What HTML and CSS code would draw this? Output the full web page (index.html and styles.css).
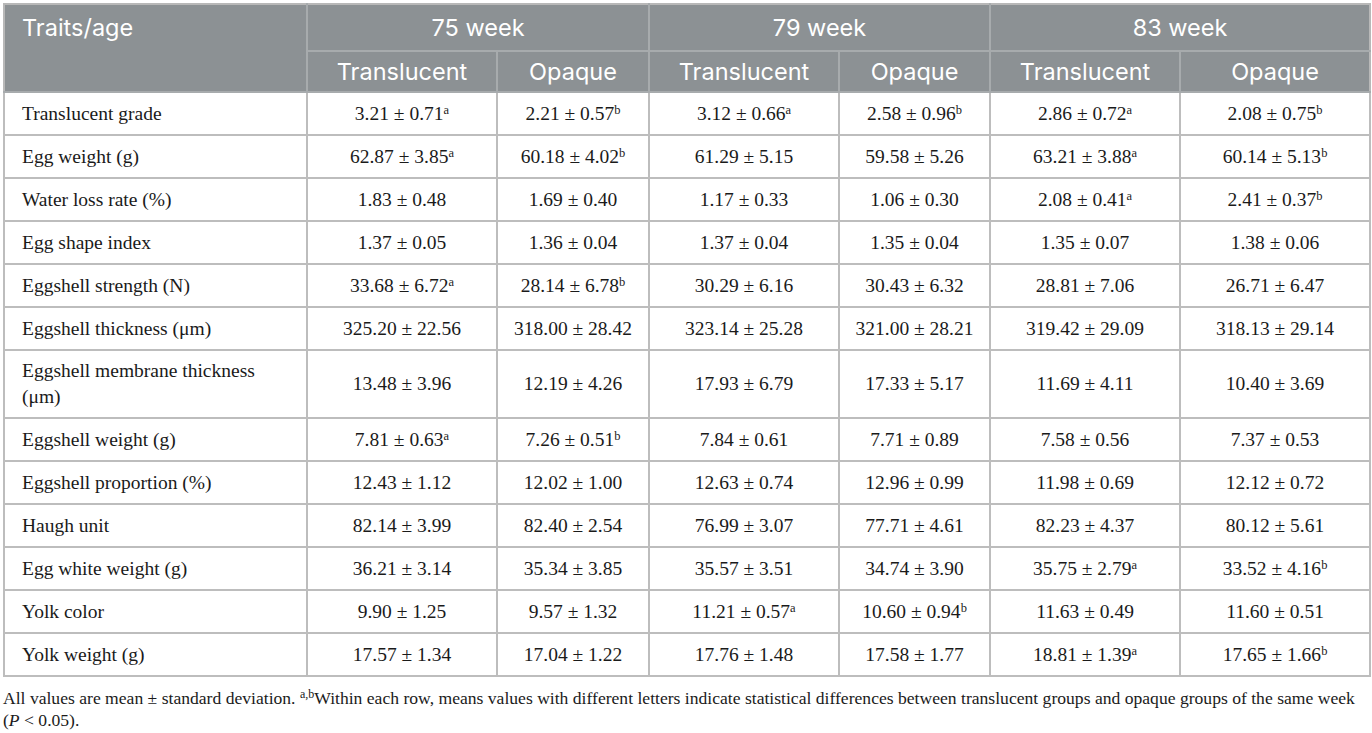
FILE: index.html
```html
<!DOCTYPE html>
<html lang="en">
<head>
<meta charset="utf-8">
<title>Table</title>
<link rel="stylesheet" href="styles.css">
</head>
<body>
<div class="wrap">
<table class="data">
  <colgroup>
    <col class="c-trait"><col class="c-t"><col class="c-o"><col class="c-t"><col class="c-o2"><col class="c-t3"><col class="c-o3">
  </colgroup>
  <thead>
    <tr class="h1">
      <th class="left" rowspan="2">Traits/age</th>
      <th colspan="2">75 week</th>
      <th colspan="2">79 week</th>
      <th colspan="2">83 week</th>
    </tr>
    <tr class="h2">
      <th>Translucent</th><th>Opaque</th>
      <th>Translucent</th><th>Opaque</th>
      <th>Translucent</th><th>Opaque</th>
    </tr>
  </thead>
  <tbody>
    <tr><td class="left">Translucent grade</td><td>3.21 ± 0.71<sup>a</sup></td><td>2.21 ± 0.57<sup>b</sup></td><td>3.12 ± 0.66<sup>a</sup></td><td>2.58 ± 0.96<sup>b</sup></td><td>2.86 ± 0.72<sup>a</sup></td><td>2.08 ± 0.75<sup>b</sup></td></tr>
    <tr><td class="left">Egg weight (g)</td><td>62.87 ± 3.85<sup>a</sup></td><td>60.18 ± 4.02<sup>b</sup></td><td>61.29 ± 5.15</td><td>59.58 ± 5.26</td><td>63.21 ± 3.88<sup>a</sup></td><td>60.14 ± 5.13<sup>b</sup></td></tr>
    <tr><td class="left">Water loss rate (%)</td><td>1.83 ± 0.48</td><td>1.69 ± 0.40</td><td>1.17 ± 0.33</td><td>1.06 ± 0.30</td><td>2.08 ± 0.41<sup>a</sup></td><td>2.41 ± 0.37<sup>b</sup></td></tr>
    <tr><td class="left">Egg shape index</td><td>1.37 ± 0.05</td><td>1.36 ± 0.04</td><td>1.37 ± 0.04</td><td>1.35 ± 0.04</td><td>1.35 ± 0.07</td><td>1.38 ± 0.06</td></tr>
    <tr><td class="left">Eggshell strength (N)</td><td>33.68 ± 6.72<sup>a</sup></td><td>28.14 ± 6.78<sup>b</sup></td><td>30.29 ± 6.16</td><td>30.43 ± 6.32</td><td>28.81 ± 7.06</td><td>26.71 ± 6.47</td></tr>
    <tr><td class="left">Eggshell thickness (μm)</td><td>325.20 ± 22.56</td><td>318.00 ± 28.42</td><td>323.14 ± 25.28</td><td>321.00 ± 28.21</td><td>319.42 ± 29.09</td><td>318.13 ± 29.14</td></tr>
    <tr class="tall"><td class="left">Eggshell membrane thickness<br>(μm)</td><td>13.48 ± 3.96</td><td>12.19 ± 4.26</td><td>17.93 ± 6.79</td><td>17.33 ± 5.17</td><td>11.69 ± 4.11</td><td>10.40 ± 3.69</td></tr>
    <tr><td class="left">Eggshell weight (g)</td><td>7.81 ± 0.63<sup>a</sup></td><td>7.26 ± 0.51<sup>b</sup></td><td>7.84 ± 0.61</td><td>7.71 ± 0.89</td><td>7.58 ± 0.56</td><td>7.37 ± 0.53</td></tr>
    <tr><td class="left">Eggshell proportion (%)</td><td>12.43 ± 1.12</td><td>12.02 ± 1.00</td><td>12.63 ± 0.74</td><td>12.96 ± 0.99</td><td>11.98 ± 0.69</td><td>12.12 ± 0.72</td></tr>
    <tr><td class="left">Haugh unit</td><td>82.14 ± 3.99</td><td>82.40 ± 2.54</td><td>76.99 ± 3.07</td><td>77.71 ± 4.61</td><td>82.23 ± 4.37</td><td>80.12 ± 5.61</td></tr>
    <tr><td class="left">Egg white weight (g)</td><td>36.21 ± 3.14</td><td>35.34 ± 3.85</td><td>35.57 ± 3.51</td><td>34.74 ± 3.90</td><td>35.75 ± 2.79<sup>a</sup></td><td>33.52 ± 4.16<sup>b</sup></td></tr>
    <tr><td class="left">Yolk color</td><td>9.90 ± 1.25</td><td>9.57 ± 1.32</td><td>11.21 ± 0.57<sup>a</sup></td><td>10.60 ± 0.94<sup>b</sup></td><td>11.63 ± 0.49</td><td>11.60 ± 0.51</td></tr>
    <tr><td class="left">Yolk weight (g)</td><td>17.57 ± 1.34</td><td>17.04 ± 1.22</td><td>17.76 ± 1.48</td><td>17.58 ± 1.77</td><td>18.81 ± 1.39<sup>a</sup></td><td>17.65 ± 1.66<sup>b</sup></td></tr>
  </tbody>
</table>
<p class="note">All values are mean ± standard deviation. <sup>a,b</sup>Within each row, means values with different letters indicate statistical differences between translucent groups and opaque groups of the same week (<i>P</i> &lt; 0.05).</p>
</div>
</body>
</html>
```

FILE: styles.css
```css
html, body {
  margin: 0;
  padding: 0;
  background: #ffffff;
}

.wrap {
  padding: 3px 3px 0 3px;
  width: 1366px;
}

.data {
  width: 1366px;
  border-collapse: collapse;
  table-layout: fixed;
  font-family: "Liberation Serif", "Times New Roman", serif;
  font-size: 19.5px;
  color: #1a1a1a;
}

.c-trait { width: 303px; }
.c-t { width: 190px; }
.c-o { width: 152px; }
.c-o2 { width: 151px; }
.c-t3 { width: 190px; }
.c-o3 { width: 190px; }

.data th {
  background: #8c9194;
  color: #ffffff;
  font-family: Inter, "Liberation Sans", sans-serif;
  font-weight: 400;
  font-size: 23.5px;
  text-align: center;
  border: 2px solid #a7abad;
  padding: 0;
  line-height: 28px;
}

.data tr.h1 th { height: 45px; }
.data tr.h2 th { height: 39px; }

.data th.left {
  text-align: left;
  vertical-align: top;
  padding: 9px 0 0 17px;
}

.data thead tr:first-child th { border-top-color: #b8b8b8; }
.data thead th:first-child { border-left-color: #b8b8b8; }
.data thead th:last-child { border-right-color: #b8b8b8; }

.data td {
  border: 2px solid #bdbdbd;
  text-align: center;
  vertical-align: middle;
  padding: 8px 4px 8px 4px;
  line-height: 25px;
}

.data td.left {
  text-align: left;
  padding-left: 17px;
}

.data tr.tall td {
  padding-top: 7px;
  padding-bottom: 7px;
  line-height: 26px;
}

.data sup {
  font-size: 12.5px;
  line-height: 0;
  vertical-align: 6px;
}

.note {
  margin: 10px 0 0 0;
  font-family: "Liberation Serif", "Times New Roman", serif;
  font-size: 17.6px;
  line-height: 22px;
  color: #1a1a1a;
}

.note sup {
  font-size: 12px;
  line-height: 0;
  vertical-align: 6px;
}
```
